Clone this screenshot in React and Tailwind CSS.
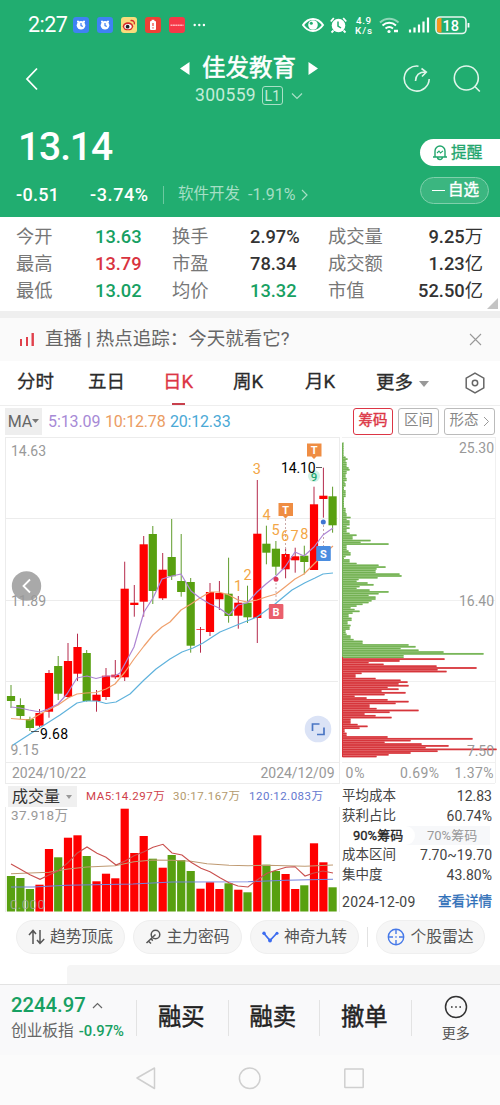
import React, { useState } from "react";

const RED = "#fe0000";
const GREEN = "#58a010";

// [x, high, low, bodyTop, bodyBottom, up]
const candles = [
  [11, 685, 708, 696, 701, 0],
  [20.4, 698.3, 719.3, 705, 716, 0],
  [29.9, 716.7, 731, 719, 728, 0],
  [39.5, 709, 727, 713, 725.7, 1],
  [49, 670, 717.7, 673, 711.7, 1],
  [58.2, 656, 700, 666, 693.7, 0],
  [68, 643, 697.7, 661, 697, 1],
  [77.5, 633.7, 681, 647, 673.7, 1],
  [86.7, 650, 701.7, 653, 701, 0],
  [96.5, 690, 711.7, 694.7, 701, 1],
  [106, 668, 700, 675.7, 697, 1],
  [115.3, 660, 679, 674.7, 677.3, 1],
  [124.7, 561.7, 681, 588.7, 677.3, 1],
  [134.3, 585, 616.7, 602.7, 605, 1],
  [143.7, 536, 616.7, 544.3, 601.7, 1],
  [152.8, 526, 604, 534, 591, 0],
  [162.7, 553, 600, 569.7, 598.3, 1],
  [171.7, 519, 580, 557, 576.3, 0],
  [181.2, 534, 596.7, 581, 592, 0],
  [190.7, 578, 652.7, 582, 645.7, 0],
  [200.5, 627, 652.7, 629, 629.7, 1],
  [210, 583, 636, 592, 632, 1],
  [219.4, 581, 610, 593, 599.3, 1],
  [228.6, 557.7, 622.7, 593.7, 616, 0],
  [238.3, 596, 628.7, 602.7, 615.7, 1],
  [247.5, 585.7, 623, 602.7, 617.3, 0],
  [257.3, 480, 643, 533.7, 618, 1],
  [266.4, 525.7, 564.3, 543.7, 552.7, 0],
  [275.9, 541, 575, 548.7, 566.7, 0],
  [285.6, 547.7, 578.3, 554, 569.3, 1],
  [295.2, 547.7, 572.7, 556.3, 560.3, 1],
  [304.3, 545.7, 574.3, 555.7, 562, 0],
  [314, 486.7, 570, 504.3, 570, 1],
  [323.4, 467.7, 517.7, 495.7, 499, 1],
  [332.6, 486.7, 532.7, 496.3, 525.3, 0],
];

const volumes = [
  876, 878, 889, 884.7, 849, 857.3, 837.7, 835.3, 856, 881.3, 873.7, 878.3,
  808.7, 853, 836, 858.7, 867.7, 855, 860, 871, 888.7, 882.3, 889, 883.3, 889.7,
  892.3, 835.3, 864.7, 871, 874, 889, 885.3, 843.3, 862.3, 887.3,
];

const ma5 =
  "11,707 20,708 29,710 40,712 48,709 58,704 67,694 77,678 87,676 96,678.5 106,676 115,676 120,673 134,647 144,612 153,598 162,579 172,576 181,574 191,591 200,598 210,604 219,608 229,615 238,605 247,603 257,592 266,584 276,576 285,567 295,552 304,556 314,547 323,535 333,528";
const ma10 =
  "11,718.5 30,720 40,714 58,705 68,698 77,694 86,693 96,692.5 106,689 115,684 125,672 134,659 144,646 153,635 162,627 170,622 181,610 191,604 200,598 210,592 219,592 229,595 238,600 247,602 257,600 266,597 276,594 285,587 295,579 304,574 316,562 325,553 333,546";
const ma20 =
  "13,745 30,734 49,722 60,715 77,703 86,701 97,701 106,703.5 116,702 130,694 144,680 156,669 170,659 182,652 193,648 203,643 220,632 237,625 257,617 275,604 292,590 305,582.7 315,578 323,574 333,573";
const vol5 =
  "11,864 20,869 30,874.7 40,879.3 49,875 58,871 68,862.7 77,853.3 87,847 97,853.3 106,857.3 116,865 125,861 134,855.7 144,851.7 153,847.3 163,844.3 172,853 182,855 191,862.3 201,868.3 210,871.7 220,877.7 229,882.7 238,886 248,887 257,880 267,873.3 276,870.3 286,867.3 295,866.7 305,876 313,873.3 323,871 333,873";
const vol30 =
  "11,873.7 30,873 49,872.3 68,869 87,867 115,865.7 134,861.7 153,860 172,860.3 191,861.3 207,863.7 229,865.3 248,865.7 267,865.3 305,866.3 333,865";
const vol120 =
  "11,887 33,887 67,885.3 133,884 172,882 248,881.7 286,880.3 333,879.3";

// chip distribution: [y, width]
const chips = [
  [443, 1], [455, 1], [457, 3], [458.5, 5], [461, 3], [463, 4], [466, 4], [468, 6], [470, 7], [472, 4],
  [475, 3], [479, 4], [482, 2], [485, 3], [488, 1.5], [491, 3], [495, 3], [500, 1.5], [505, 1.5],
  [511, 3], [515, 4], [518, 8], [520, 4], [522, 7], [524, 7], [526, 4], [527.5, 7], [530, 4], [534, 7], [536, 14], [538, 10],
  [540.5, 28], [542.5, 18], [544, 46], [546, 4], [549, 4], [551, 6], [554, 8], [556, 3], [558, 1.5], [561, 7],
  [563, 14], [565, 36], [566.7, 43], [568.5, 34], [572, 33], [574, 57], [575.5, 59], [577, 35],
  [579, 16], [581, 14], [583, 25], [584.5, 31], [586, 17], [588, 14], [589.5, 27], [591.3, 46],
  [593, 36], [595, 26], [598.5, 33], [600, 29], [602, 26], [604, 20], [606, 14], [608, 8],
  [609.5, 12], [611, 17], [613, 10], [616, 6], [619, 9], [622, 5], [626, 8], [628, 7], [631, 3],
  [635, 4], [637, 8], [639.5, 11], [642.5, 20], [644, 66], [646, 73], [647.5, 41], [649.5, 58],
  [651, 76], [652.8, 101], [654.6, 141], [656.5, 61], [658.3, 102], [660, 57], [662, 26],
  [664, 41], [665.5, 94], [667.3, 134], [669, 95], [670.7, 114], [672.3, 104], [674, 19],
  [676, 13], [678, 33], [679.5, 43], [681, 58], [682.7, 65], [684.5, 56], [686.3, 66], [688, 45],
  [690, 56], [691.5, 39], [693.3, 63], [695.5, 42], [697, 12], [699, 24], [700.5, 45],
  [702.3, 66], [704, 53], [706, 27], [708, 34], [709.5, 44], [711.3, 76], [713, 47], [715, 22],
  [716.5, 33], [718, 49], [720, 8], [723, 8], [725, 15], [727, 25], [728.5, 17], [731, 2],
  [735, 4], [737, 45], [739, 130], [741, 68], [742.5, 42], [744.5, 79], [746.3, 106],
  [748, 83], [750, 154], [751.5, 95], [753.5, 68], [755, 46], [756.7, 34],
];

const chipRows = [];
for (let y = 443.2; y < 757.5; y += 1.77) {
  let best = chips[0];
  for (const c of chips) {
    if (Math.abs(c[0] - y) < Math.abs(best[0] - y)) best = c;
  }
  chipRows.push([y, best[1]]);
}

// last item is the unit after the turnover / market value
const stats = [
  ["今开", "13.63", "text-[#17a062]", "换手", "2.97%", "text-[#333]", "成交量", "9.25", "万"],
  ["最高", "13.79", "text-[#d9343f]", "市盈", "78.34", "text-[#333]", "成交额", "1.23", "亿"],
  ["最低", "13.02", "text-[#17a062]", "均价", "13.32", "text-[#17a062]", "市值", "52.50", "亿"],
];

const tabs = [
  ["分时", "w-[71px]"],
  ["五日", "w-[75px]"],
  ["日K", "w-[70px]"],
  ["周K", "w-[72px]"],
  ["月K", "w-[71px]"],
];

function StatusBar() {
  return (
    <div className="flex h-[50px] items-center pl-7 text-white">
      <span className="w-[45px] text-[21.5px] tracking-[-0.5px]">2:27</span>
      <div className="flex items-center gap-2">
        {[0, 1].map((i) => (
          <svg key={i} width="16" height="16" viewBox="0 0 16 16">
            <rect width="16" height="16" rx="3" fill="#3f82f3" />
            <circle cx="8" cy="8.3" r="4.3" fill="#fff" />
            <path d="M4 4.5h2M10 4.5h2" stroke="#fff" strokeWidth="1.3" />
            <path d="M8 6v2.6l1.8 1" stroke="#3f82f3" strokeWidth="1.2" fill="none" />
          </svg>
        ))}
        <svg width="16" height="16" viewBox="0 0 16 16">
          <rect width="16" height="16" rx="3" fill="#f9dc7c" />
          <ellipse cx="7" cy="9.3" rx="5.2" ry="4" fill="#d52b2a" />
          <ellipse cx="7" cy="9.6" rx="3.7" ry="2.7" fill="#fff" />
          <circle cx="6.6" cy="9.7" r="1.9" fill="#222" />
          <path d="M9.5 3.6c2.6-.6 4.4 1.2 3.8 3.8" stroke="#d52b2a" strokeWidth="1.3" fill="none" />
        </svg>
        <svg width="16" height="16" viewBox="0 0 16 16">
          <rect width="16" height="16" rx="3" fill="#ee4036" />
          <rect x="5" y="4" width="6" height="9" rx="1" fill="#fff" />
          <rect x="6.6" y="2.8" width="2.8" height="2" fill="#fff" />
          <path d="M8 6v3M8 10.3v1.2" stroke="#ee4036" strokeWidth="1.2" />
        </svg>
        <svg width="16" height="16" viewBox="0 0 16 16">
          <rect width="16" height="16" rx="3" fill="#f63848" />
          <path d="M1.5 8.3h13" stroke="#ffb3b8" strokeWidth="1.4" strokeDasharray="2 .4" />
        </svg>
        <svg width="13" height="4" viewBox="0 0 13 4" fill="#fff">
          <circle cx="1.7" cy="2" r="1.2" />
          <circle cx="6.3" cy="2" r="1.2" />
          <circle cx="10.9" cy="2" r="1.2" />
        </svg>
      </div>
      <svg className="ml-auto mr-7" width="170" height="24" viewBox="302 13 170 24" fill="none">
        <path d="M303 25c5.5-8 14.5-8 20 0c-5.5 8-14.500 8-20 0z" stroke="#fff" strokeWidth="2" />
        <circle cx="313" cy="25" r="4.8" fill="#fff" />
        <circle cx="311.3" cy="23.3" r="1.5" fill="#21ad70" />
        <circle cx="338.5" cy="25.5" r="6.8" fill="#fff" />
        <path d="M330.8 21.5l3-3.5M346.2 21.5l-3-3.5M333.5 30.5l-2 2M343.5 30.5l2 2" stroke="#fff" strokeWidth="1.8" />
        <path d="M338 21.5v4.5l3 2" stroke="#21ad70" strokeWidth="1.5" />
        <text x="363.5" y="23.5" fill="#fff" fontSize="9.8" fontWeight="500" textAnchor="middle" textLength="15">4.9</text>
        <text x="363.5" y="34" fill="#fff" fontSize="9.8" fontWeight="500" textAnchor="middle" textLength="17">K/s</text>
        <path d="M380 22.5c5.5-5 13-5 18.5 0" stroke="#8fd6b7" strokeWidth="2" />
        <path d="M382.5 25.5c4-3.6 9.5-3.6 13.5 0M385.5 28.5c2.5-2 5-2 7.5 0" stroke="#fff" strokeWidth="2" />
        <circle cx="389" cy="31.5" r="1.6" fill="#fff" />
        <path d="M394 31h4" stroke="#fff" strokeWidth="2.5" />
        <path d="M410 32.5v-3M414.5 32.5v-5M419 32.5v-8M423.5 32.5v-11M428 32.5v-15" stroke="#fff" strokeWidth="2.2" />
        <rect x="436" y="17" width="30" height="16.5" rx="4" stroke="#e6f6ee" strokeWidth="1.6" />
        <path d="M441.5 18v14.5h-2a2.5 2.5 0 0 1-2.5-2.5v-9.5a2.5 2.5 0 0 1 2.5-2.5z" fill="#f8951d" />
        <path d="M468.5 23v4.5" stroke="#fff" strokeWidth="1.8" />
        <text x="450.8" y="30.5" fill="#fff" fontSize="14.5" fontWeight="500" textAnchor="middle">18</text>
      </svg>
    </div>
  );
}

function Header() {
  return (
    <header className="h-[217px] bg-[#21ad70] text-white">
      <StatusBar />
      <div className="flex h-[61px] items-start justify-between pl-[25px] pr-[19px]">
        <svg className="mt-[17px]" width="75" height="24" viewBox="0 0 75 24">
          <path d="M12 1.5L2 12l10 10.5" stroke="#fff" strokeWidth="1.8" fill="none" />
        </svg>
        <div className="-ml-[5px] flex flex-col items-center">
          <div className="flex h-[36px] items-center gap-3 text-[23.5px] leading-9 [-webkit-text-stroke:0.5px]">
            <svg width="10" height="14" viewBox="0 0 10 14">
              <path d="M9.5 1v13L0 7.5z" fill="#fff" />
            </svg>
            <span className="whitespace-nowrap">佳发教育</span>
            <svg width="10" height="14" viewBox="0 0 10 14">
              <path d="M.5 1v13L10 7.5z" fill="#fff" />
            </svg>
          </div>
          <div className="flex h-[19px] items-center text-[17.5px] tracking-[0.3px] text-[#c4ecd8]">
            <span>300559</span>
            <span className="ml-[6px] flex h-[19px] w-[21px] items-center justify-center rounded-[3px] border border-[#a9e0c6] text-[14px]">L1</span>
            <svg className="ml-2" width="12" height="8" viewBox="0 0 12 8">
              <path d="M1 1.5l5 5 5-5" stroke="#a9e0c6" strokeWidth="1.2" fill="none" />
            </svg>
          </div>
        </div>
        <svg className="mt-[14px]" width="78" height="30" viewBox="403 64 78 30" fill="none" stroke="#dff5ea" strokeWidth="1.6">
          <path d="M418.5 66.2a12.500 12.500 0 1 0 10.7 12.8" />
          <path d="M415.5 81c.2-5.5 2.5-9 10-9M421.5 68.5l4.8 3.5-4.3 4.5" />
          <circle cx="466.3" cy="78" r="12" />
          <path d="M474.8 86.5l5 5" />
        </svg>
      </div>
      <div className="flex justify-between">
        <div>
          <div className="mt-[12px] h-[48px] pl-[18px] text-[39px] font-medium leading-[48px] tracking-[-1.1px]">13.14</div>
          <div className="mt-[12px] flex h-6 items-center pl-4 text-[18px] font-medium">
            <span className="w-[74px] tracking-[0.3px]">-0.51</span>
            <span className="w-[73px] tracking-[0.6px]">-3.74%</span>
            <span className="h-[18px] w-px bg-[#6cc9a0]" />
            <span className="ml-[14px] text-[15.5px] font-normal text-[#a5dfc5]">软件开发</span>
            <span className="ml-2 text-[16px] font-normal text-[#a5dfc5]">-1.91%</span>
            <svg className="ml-[6px]" width="7" height="12" viewBox="0 0 7 12">
              <path d="M1 1l5 5-5 5" stroke="#a5dfc5" strokeWidth="1.2" fill="none" />
            </svg>
          </div>
        </div>
        <div className="mt-7 flex w-20 flex-col items-start gap-[11px]">
          <div className="flex h-[27px] w-20 items-center gap-[3px] rounded-l-full bg-white pl-[12px] text-[15.7px] text-[#21a56c] [-webkit-text-stroke:0.3px]">
            <svg width="16" height="17" viewBox="0 0 16 17" fill="none" stroke="#21a56c" strokeWidth="1.4">
              <path d="M3 12.5V7a5 5 0 0 1 10 0v5.500M1 13h14M5.5 13a2.500 2.500 0 0 0 5 0" />
              <path d="M5 9l2-2 1.5 2L11 6.800" strokeWidth="1.1" />
            </svg>
            <span className="whitespace-nowrap">提醒</span>
          </div>
          <div className="flex h-[27px] w-[69px] items-center gap-[3px] rounded-full border border-[#7fd0ab] bg-[#3bb680] pl-[11px] text-[15.5px] [-webkit-text-stroke:0.4px]">
            <span className="h-[1.5px] w-[13px] bg-white" />
            <span className="whitespace-nowrap">自选</span>
          </div>
        </div>
      </div>
    </header>
  );
}

function Stats() {
  return (
    <section className="flex h-[94px] items-start">
      <div className="w-[483px] pl-4 pt-[7px]">
        {stats.map((r) => (
          <div key={r[0]} className="flex h-[27px] items-center whitespace-nowrap text-[18.3px] text-[#333]">
            <span className="w-[79px] text-[#777]">{r[0]}</span>
            <span className={`w-[77px] font-medium ${r[2]}`}>{r[1]}</span>
            <span className="w-[78px] text-[#777]">{r[3]}</span>
            <span className={`w-[78px] font-medium ${r[5]}`}>{r[4]}</span>
            <span className="text-[#777]">{r[6]}</span>
            <span className="ml-auto">
              <span className="font-medium">{r[7]}</span>
              {r[8]}
            </span>
          </div>
        ))}
      </div>
      <svg className="ml-1 mt-[81px]" width="11" height="11" viewBox="0 0 11 11">
        <path d="M11 0v11H0z" fill="#c4c4c4" />
      </svg>
    </section>
  );
}

function PriceChart() {
  return (
    <svg className="block" width="340" height="349" viewBox="0 437 340 349" fill="none">
      <g stroke="#ececec">
        <path d="M5 437.5h335M5 518.5h333M5 600.5h333M5 681.5h333M5 762.5h335M5 783.5h335" />
        <path d="M5.5 437v346M339.5 437v346" />
      </g>
      <circle cx="26.5" cy="586" r="14.7" fill="#a9a9a9" />
      <path d="M30 579.5l-6.500 6.500 6.500 6.500" stroke="#fff" strokeWidth="1.8" />
      <g fill="#999" fontSize="14">
        <text x="11" y="456" textLength="35">14.63</text>
        <text x="11" y="606" textLength="35">11.89</text>
        <text x="10.5" y="755" textLength="28">9.15</text>
        <text x="12" y="778" textLength="74">2024/10/22</text>
        <text x="260.5" y="778" textLength="74">2024/12/09</text>
      </g>
      {candles.map(([x, hi, lo, top, bottom, up], i) => (
        <g key={i}>
          <path d={`M${x} ${hi}V${lo}`} stroke={up ? "#b52a4c" : "#5f9c2c"} strokeWidth="1" />
          <rect x={x - 4.1} y={top} width="8.2" height={bottom - top} fill={up ? RED : GREEN} />
        </g>
      ))}
      <path d="M285.5 519v40M276 579v26M323.5 525v22" stroke="#c9a9a9" strokeDasharray="2 2" />
      <g strokeWidth="1.2" strokeLinejoin="round">
        <polyline points={ma20} stroke="#5fb2dc" />
        <polyline points={ma10} stroke="#efa06c" />
        <polyline points={ma5} stroke="#ae86d3" />
      </g>
      <g fill="#f3a646" fontSize="14.5" textAnchor="middle">
        <text x="238" y="590.5">1</text>
        <text x="247.5" y="580">2</text>
        <text x="256.8" y="473.5">3</text>
        <text x="266.5" y="520">4</text>
        <text x="275.6" y="534.5">5</text>
        <text x="285" y="541">6</text>
        <text x="294.5" y="541">7</text>
        <text x="304.3" y="539">8</text>
      </g>
      <path d="M307 443.5h14.5v13h-5l-2.500 2.500-2.500-2.500h-4.500z" fill="#ef8d43" />
      <path d="M278.5 503h14.5v13h-5l-2.500 2.500-2.500-2.500h-4.500z" fill="#ef8d43" />
      <circle cx="314" cy="476" r="6" fill="#d3f1e4" />
      <rect x="268.8" y="604" width="14.6" height="15" rx="1" fill="#ea5f6c" />
      <rect x="316.2" y="546" width="14.6" height="15" rx="1" fill="#4b8de0" />
      <g fill="#fff" fontSize="11" fontWeight="700" textAnchor="middle">
        <text x="314.2" y="454">T</text>
        <text x="285.7" y="513.5">T</text>
        <text x="276" y="615.5">B</text>
        <text x="323.5" y="557.5">S</text>
      </g>
      <circle cx="276" cy="579.3" r="2.5" fill="#dc3555" />
      <circle cx="323.3" cy="522" r="2.5" fill="#3f74d1" />
      <text x="314" y="480.5" fill="#1fa873" fontSize="11.5" fontWeight="500" textAnchor="middle">9</text>
      <path d="M31 731.5h8M316 467.5h6" stroke="#333" strokeWidth=".8" />
      <text x="281" y="473" fill="#000" fontSize="14" textLength="34.5">14.10</text>
      <text x="40" y="738.5" fill="#000" fontSize="14" textLength="28">9.68</text>
      <circle cx="318" cy="729" r="13.3" fill="#dbe3f6" />
      <path d="M312.5 731v-7h7M324 727.5v7h-7" stroke="#4a76c4" strokeWidth="1.7" />
    </svg>
  );
}

function ChipChart() {
  return (
    <svg className="block" width="160" height="349" viewBox="340 437 160 349">
      <path d="M342 437.5h153M342 518.5h153M342 600.5h153M342 681.5h153M342 762.5h153M342 783.5h153M495.5 437v346" stroke="#f0f0f0" fill="none" />
      <g fill="#999" fontSize="14">
        <text x="459" y="452.5" textLength="35">25.30</text>
        <text x="459" y="606" textLength="35">16.40</text>
      </g>
      {/* pale row with a darker core, so neighbouring rows merge into one shape */}
      {chipRows.map(([y, w]) => (
        <g key={y}>
          <rect x="342.5" y={y - 0.88} width={w} height="1.77" fill={y < 657.5 ? "#93c878" : "#e2565a"} />
          <rect x="342.5" y={y - 0.6} width={w} height="1.2" fill={y < 657.5 ? "#73b052" : "#d5353b"} />
        </g>
      ))}
      <rect x="342" y="443" width="1" height="214" fill="#72b055" />
      <rect x="342" y="657" width="1" height="100" fill="#db3237" />
      <g fill="#999" fontSize="14">
        <text x="467" y="755.5" textLength="27">7.50</text>
        <text x="345.5" y="778" textLength="19">0%</text>
        <text x="400" y="778" textLength="39">0.69%</text>
        <text x="454.5" y="778" textLength="39">1.37%</text>
      </g>
    </svg>
  );
}

function VolumeChart() {
  return (
    <svg className="block" width="340" height="106" viewBox="0 807 340 106" fill="none">
      <path d="M5.5 807v105M339.5 807v105" stroke="#ececec" />
      <text x="11" y="820" fill="#999" fontSize="13.5" textLength="57">37.918万</text>
      {volumes.map((top, i) => (
        <rect key={i} x={candles[i][0] - 4.1} y={top} width="8.2" height={911.5 - top} fill={candles[i][5] ? RED : GREEN} />
      ))}
      <text x="10" y="909" fill="#aaa" fillOpacity=".75" fontSize="13.5" textLength="35">0.000</text>
      <g strokeWidth="1.1">
        <polyline points={vol30} stroke="#bf9a72" />
        <polyline points={vol120} stroke="#7282dd" />
        <polyline points={vol5} stroke="#c9504e" />
      </g>
    </svg>
  );
}

function ChipInfo() {
  const row = "flex h-5 items-center justify-between pr-2";
  return (
    <div className="w-[158px] text-[14px] text-[#444]">
      <div className={row}><span className="text-[13.5px]">平均成本</span><span>12.83</span></div>
      <div className={row}><span className="text-[13.5px]">获利占比</span><span>60.74%</span></div>
      <div className="mr-[10px] flex h-[19px] items-center bg-[#f7f8fa] text-[13px]">
        <span className="w-[73px] rounded-r-full bg-white pl-[11px] leading-[19px] text-[#222] [-webkit-text-stroke:0.3px]">90%筹码</span>
        <span className="pl-3 text-[#999]">70%筹码</span>
      </div>
      <div className={row}><span className="text-[13.5px]">成本区间</span><span>7.70~19.70</span></div>
      <div className={row}><span className="text-[13.5px]">集中度</span><span>43.80%</span></div>
      <div className="mt-[7px] flex h-5 items-center justify-between pr-2">
        <span className="tracking-[0.3px]">2024-12-09</span>
        <span className="text-[13.5px] text-[#2f6fb8] [-webkit-text-stroke:0.3px]">查看详情</span>
      </div>
    </div>
  );
}

const pill = "flex h-[34px] items-center justify-center gap-[5px] whitespace-nowrap rounded-full border border-[#efefef] bg-[#f6f6f6] text-[15.8px] text-[#555]";

function Tools() {
  return (
    <div className="flex h-[53px] items-start pl-4 pt-[8px]">
      <div className={`${pill} w-[109px]`}>
        <svg width="17" height="16" viewBox="0 0 17 16" fill="none" stroke="#555" strokeWidth="1.5">
          <path d="M5 15V2M1 6l4-4.500L8 5M12 1v13M9 11l3 3.500L16.200 10" />
        </svg>
        趋势顶底
      </div>
      <div className={`${pill} ml-2 w-[109px]`}>
        <svg width="16" height="16" viewBox="0 0 16 16" fill="none" stroke="#555" strokeWidth="1.5">
          <circle cx="10.5" cy="5.5" r="4.3" />
          <path d="M10.5 5.5L1.500 14M3.500 12.200l2.500 2.300M6 9.800l1.800 1.800" />
        </svg>
        主力密码
      </div>
      <div className={`${pill} ml-2 w-[109px]`}>
        <svg width="17" height="12" viewBox="0 0 17 12" fill="none">
          <path d="M2 2.500l6 7L15 2" stroke="#3c6cf0" strokeWidth="1.8" />
          <circle cx="2" cy="2.3" r="1.7" fill="#3c6cf0" />
          <circle cx="8" cy="9.5" r="1.9" fill="#3c6cf0" />
          <circle cx="15" cy="2.3" r="1.5" fill="#3c6cf0" />
        </svg>
        神奇九转
      </div>
      <div className="ml-2 mt-[7px] h-5 w-px bg-[#e2e2e2]" />
      <div className={`${pill} ml-2 w-[109px]`}>
        <svg width="18" height="18" viewBox="0 0 18 18" fill="none" stroke="#4679e8" strokeWidth="1.4">
          <circle cx="9" cy="9" r="7.7" />
          <path d="M9 1v5M9 12v5M1 9h5M12 9h5M9 8.300v1.400" />
        </svg>
        个股雷达
      </div>
    </div>
  );
}

function BottomBar() {
  return (
    <div className="flex h-[71px] items-start border-t border-[#e3e3e3] bg-[#f9f9fa]">
      <div className="w-[136px] pl-[11px] pt-[8px]">
        <div className="flex h-6 items-center gap-[6px] text-[20.3px] font-medium text-[#17a062]">
          2244.97
          <svg width="11" height="7" viewBox="0 0 11 7">
            <path d="M1 6l4.500-4.500L10 6" stroke="#666" strokeWidth="1.2" fill="none" />
          </svg>
        </div>
        <div className="mt-[2px] flex h-6 items-center gap-[5px] whitespace-nowrap text-[15.7px] text-[#666]">
          创业板指
          <span className="text-[14.8px] font-medium text-[#17a062]">-0.97%</span>
        </div>
      </div>
      {["融买", "融卖", "撤单"].map((t) => (
        <div key={t} className="mt-[15px] flex h-9 w-[91.5px] items-center justify-center border-l border-[#e3e3e3] pr-[2px] text-[23.3px] text-[#222] [-webkit-text-stroke:0.5px]">
          {t}
        </div>
      ))}
      <div className="mt-[15px] h-9 w-px bg-[#e3e3e3]" />
      <div className="flex flex-1 flex-col items-center pt-[10px] text-[14px] text-[#555]">
        <svg width="24" height="24" viewBox="0 0 24 24">
          <circle cx="12" cy="12" r="10.5" stroke="#333" strokeWidth="1.5" fill="none" />
          <path d="M7 12h1.600M11.200 12h1.600M15.400 12h1.600" stroke="#333" strokeWidth="1.5" />
        </svg>
        <span className="mt-1 leading-5">更多</span>
      </div>
    </div>
  );
}

export default function App() {
  const [tab, setTab] = useState("日K");
  const [showLive, setShowLive] = useState(true);

  return (
    <div className="h-[1105px] w-[500px] overflow-hidden bg-white font-[Roboto,'Noto_Sans_CJK_SC',sans-serif] leading-none">
      <Header />
      <Stats />
      <div className="h-[7px] bg-[#efefef]" />
      {showLive && (
        <div className="flex h-[43px] items-center bg-[#fafafa] pl-5 pr-[18px] text-[18.5px] text-[#666]">
          <svg width="15" height="13" viewBox="0 0 15 13" fill="#e0404b">
            <rect x="0" y="6" width="2" height="7" />
            <rect x="6" y="4" width="2" height="9" />
            <rect x="11.5" y="0" width="2.4" height="13" />
          </svg>
          <span className="ml-[10px] whitespace-nowrap">直播 | 热点追踪：今天就看它?</span>
          <button className="ml-auto" onClick={() => setShowLive(false)}>
            <svg width="13" height="13" viewBox="0 0 13 13">
              <path d="M1 1l11 11M12 1L1 12" stroke="#999" strokeWidth="1.1" />
            </svg>
          </button>
        </div>
      )}
      <div className="flex h-[45px] items-center border-b border-[#eee] pl-[17px] text-[18.5px] text-[#2b2b2b] [-webkit-text-stroke:0.3px]">
        {tabs.map(([t, w]) => (
          <div key={t} className={`${w} h-full`}>
            <button
              onClick={() => setTab(t)}
              className={`flex h-full flex-col items-center justify-between ${t === tab ? "text-[#dc3545]" : ""}`}
            >
              <span className="leading-[43px]">{t}</span>
              {t === tab && <span className="-mt-1 h-[2px] w-[13px] bg-[#c8404c]" />}
            </button>
          </div>
        ))}
        <span>更多</span>
        <svg className="ml-[6px] mt-[2px]" width="10" height="6" viewBox="0 0 10 6">
          <path d="M0 0h10L5 6z" fill="#999" />
        </svg>
        <svg className="ml-auto mr-[14px]" width="22" height="22" viewBox="0 0 22 22" fill="none" stroke="#666" strokeWidth="1.5">
          <path d="M11 1.200l8.800 5v9.600l-8.800 5-8.800-5V6.200z" />
          <circle cx="11" cy="11" r="2.7" />
        </svg>
      </div>
      <div className="flex h-[31px] items-center pl-[5px] pr-[5px] text-[16px]">
        <div className="flex h-[27px] w-[37px] items-center justify-center bg-[#eee] text-[#666]">
          MA
          <svg className="mb-[2px]" width="7" height="4" viewBox="0 0 7 4">
            <path d="M0 0h7L3.500 4z" fill="#777" />
          </svg>
        </div>
        <span className="ml-[6px] w-[57px] tracking-[-0.1px] text-[#a78ad6]">5:13.09</span>
        <span className="w-[65px] tracking-[-0.2px] text-[#eb9c62]">10:12.78</span>
        <span className="tracking-[-0.2px] text-[#4ba9d6]">20:12.33</span>
        <div className="ml-auto flex gap-[5px] text-[14.5px]">
          <span className="flex h-[27px] w-10 items-center justify-center rounded-[3px] border border-[#dc3545] text-[#dc3545] [-webkit-text-stroke:0.4px]">筹码</span>
          <span className="flex h-[27px] w-[41px] items-center justify-center rounded-[3px] border border-[#bbb] text-[#888]">区间</span>
          <span className="flex h-[27px] w-[51px] items-center justify-center gap-1 rounded-[3px] border border-[#bbb] text-[#888]">
            形态
            <svg width="7" height="11" viewBox="0 0 7 11">
              <path d="M1 1l4.500 4.500L1 10" stroke="#999" fill="none" />
            </svg>
          </span>
        </div>
      </div>
      <div className="flex">
        <PriceChart />
        <ChipChart />
      </div>
      <div className="flex h-[126px]">
        <div className="w-[342px]">
          <div className="flex h-[21px] items-center whitespace-nowrap pl-2 text-[11.5px] tracking-[0.5px]">
            <div className="flex h-[21px] w-[69px] items-center gap-[6px] bg-[#f0f0f0] pl-1 text-[16px] tracking-normal text-[#333]">
              成交量
              <svg width="6" height="4" viewBox="0 0 6 4">
                <path d="M0 0h6L3 4z" fill="#999" />
              </svg>
            </div>
            <span className="ml-[9px] w-[87px] text-[#cf3f4b]">MA5:14.297万</span>
            <span className="w-[76px] text-[#b39a6d]">30:17.167万</span>
            <span className="text-[#6478cf]">120:12.083万</span>
          </div>
          <VolumeChart />
        </div>
        <ChipInfo />
      </div>
      <Tools />
      <div className="flex h-[19px] justify-end">
        <div className="w-[433px] rounded-tl bg-[#f5f5f5]" />
      </div>
      <BottomBar />
      <div className="flex h-[50px] justify-center bg-[#fbfbfb]">
        <svg width="230" height="50" viewBox="135 1055 230 50" fill="none" stroke="#cfcfcf" strokeWidth="1.5">
          <path d="M154.500 1068v20.500L137 1078z" strokeLinejoin="round" />
          <circle cx="249.7" cy="1078.3" r="10.3" />
          <rect x="344.8" y="1069" width="18.4" height="18.4" rx=".5" />
        </svg>
      </div>
    </div>
  );
}
